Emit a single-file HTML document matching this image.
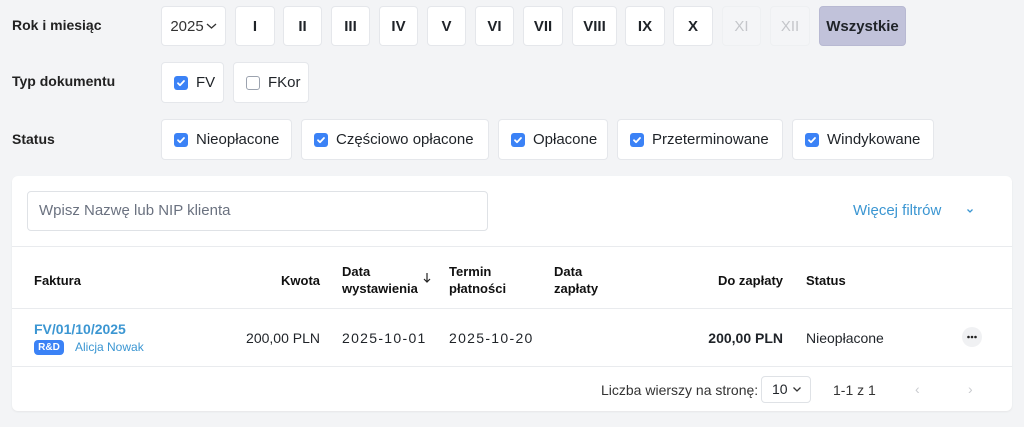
<!DOCTYPE html>
<html><head><meta charset="utf-8"><style>
*{box-sizing:border-box;margin:0;padding:0}
body{width:1024px;height:427px;background:#f3f4f6;font-family:"Liberation Sans",sans-serif;color:#1f2328;position:relative;overflow:hidden;font-size:14px}
.a{position:absolute}
.lbl{position:absolute;left:12px;font-weight:bold;font-size:14px;color:#222}
.b{position:absolute;background:#fff;border:1px solid #e5e7eb;border-radius:4px;display:flex;align-items:center;justify-content:center;font-size:15px}
.m{font-weight:bold;top:6px;height:40px}
.dis{background:#f4f5f7;border-color:#eef0f2;color:#c4c6ca;font-weight:normal}
.cb{width:14px;height:14px;border-radius:3px;background:#3b82f6;margin-right:8px;display:inline-flex;align-items:center;justify-content:center}
.cb.off{background:#fff;border:1px solid #9ca3af}
.ck{justify-content:flex-start;padding-left:12px;height:41px}
.h{position:absolute;font-weight:bold;font-size:13px;line-height:17px;color:#111}
.c{position:absolute;font-size:14px}
</style></head><body>
<div class="lbl" style="top:17px">Rok i miesiąc</div>
<div class="lbl" style="top:73px">Typ dokumentu</div>
<div class="lbl" style="top:131px">Status</div>

<div class="b m" style="left:161px;width:65px;font-weight:normal;color:#333">2025<svg width="11" height="8" viewBox="0 0 11 8" style="margin-left:2px"><path d="M1 2l4.5 4 4.5-4" fill="none" stroke="#333" stroke-width="1.3"/></svg></div>
<div class="b m" style="left:235px;width:40px">I</div>
<div class="b m" style="left:283px;width:39px">II</div>
<div class="b m" style="left:331px;width:39px">III</div>
<div class="b m" style="left:379px;width:39px">IV</div>
<div class="b m" style="left:427px;width:39px">V</div>
<div class="b m" style="left:475px;width:39px">VI</div>
<div class="b m" style="left:523px;width:40px">VII</div>
<div class="b m" style="left:572px;width:45px">VIII</div>
<div class="b m" style="left:625px;width:40px">IX</div>
<div class="b m" style="left:673px;width:40px">X</div>
<div class="b m dis" style="left:722px;width:39px">XI</div>
<div class="b m dis" style="left:770px;width:40px">XII</div>
<div class="b m" style="left:819px;width:87px;background:#c1c2da;border-color:#b8b9d2">Wszystkie</div>

<svg width="0" height="0" style="position:absolute"><defs><symbol id="t" viewBox="0 0 14 14"><path d="M4 7.2l2 2 4-4.2" fill="none" stroke="#fff" stroke-width="1.8" stroke-linecap="round" stroke-linejoin="round"/></symbol></defs></svg>

<div class="b ck" style="left:161px;top:62px;width:63px"><span class="cb"><svg width="14" height="14"><use href="#t"/></svg></span>FV</div>
<div class="b ck" style="left:233px;top:62px;width:76px"><span class="cb off"></span>FKor</div>

<div class="b ck" style="left:161px;top:119px;width:131px"><span class="cb"><svg width="14" height="14"><use href="#t"/></svg></span>Nieopłacone</div>
<div class="b ck" style="left:301px;top:119px;width:188px"><span class="cb"><svg width="14" height="14"><use href="#t"/></svg></span>Częściowo opłacone</div>
<div class="b ck" style="left:498px;top:119px;width:110px"><span class="cb"><svg width="14" height="14"><use href="#t"/></svg></span>Opłacone</div>
<div class="b ck" style="left:617px;top:119px;width:166px"><span class="cb"><svg width="14" height="14"><use href="#t"/></svg></span>Przeterminowane</div>
<div class="b ck" style="left:792px;top:119px;width:142px"><span class="cb"><svg width="14" height="14"><use href="#t"/></svg></span>Windykowane</div>

<div class="a" style="left:12px;top:176px;width:1000px;height:235px;background:#fff;border-radius:6px;box-shadow:0 1px 2px rgba(0,0,0,.06)">
<div class="a" style="left:15px;top:15px;width:461px;height:40px;border:1px solid #dfe2e6;border-radius:4px;padding-left:11px;line-height:38px;color:#6b7280;font-size:15px">Wpisz Nazwę lub NIP klienta</div>
<div class="a" style="left:841px;top:26px;color:#3b96d2;font-size:15px">Więcej filtrów</div>
<svg class="a" style="left:954px;top:32px" width="8" height="6" viewBox="0 0 8 6"><path d="M1.5 1.5l2.5 2.5 2.5-2.5" fill="none" stroke="#3b96d2" stroke-width="1.3"/></svg>
<div class="a" style="left:0;top:70px;width:1000px;height:1px;background:#e9ebee"></div>
<div class="a" style="left:0;top:132px;width:1000px;height:1px;background:#e9ebee"></div>
<div class="a" style="left:0;top:190px;width:1000px;height:1px;background:#e9ebee"></div>

<div class="h" style="left:22px;top:96px">Faktura</div>
<div class="h" style="left:250px;width:58px;text-align:right;top:96px">Kwota</div>
<div class="h" style="left:330px;top:87px">Data<br>wystawienia</div>
<svg class="a" style="left:411px;top:96px" width="8" height="12" viewBox="0 0 8 12"><path d="M4 1v9M1 7l3 3 3-3" fill="none" stroke="#222" stroke-width="1.2"/></svg>
<div class="h" style="left:437px;top:87px">Termin<br>płatności</div>
<div class="h" style="left:542px;top:87px">Data<br>zapłaty</div>
<div class="h" style="left:650px;width:121px;text-align:right;top:96px">Do zapłaty</div>
<div class="h" style="left:794px;top:96px">Status</div>

<div class="c" style="left:22px;top:145px;color:#3b96d2;font-weight:bold;font-size:14px">FV/01/10/2025</div>
<div class="a" style="left:22px;top:164px;width:30px;height:15px;background:#3b82f6;border-radius:4px;color:#fff;font-size:10px;font-weight:bold;text-align:center;line-height:15px">R&amp;D</div>
<div class="a" style="left:63px;top:164px;color:#3b96d2;font-size:12px">Alicja Nowak</div>
<div class="c" style="left:200px;width:108px;text-align:right;top:154px">200,00 PLN</div>
<div class="c" style="left:330px;top:154px;letter-spacing:1.3px">2025-10-01</div>
<div class="c" style="left:437px;top:154px;letter-spacing:1.3px">2025-10-20</div>
<div class="c" style="left:650px;width:121px;text-align:right;top:154px;font-weight:bold">200,00 PLN</div>
<div class="c" style="left:794px;top:154px">Nieopłacone</div>
<svg class="a" style="left:950px;top:151px" width="20" height="20" viewBox="0 0 20 20"><circle cx="10" cy="10" r="10" fill="#f0f1f3"/><circle cx="6.5" cy="10" r="1.3" fill="#222"/><circle cx="10" cy="10" r="1.3" fill="#222"/><circle cx="13.5" cy="10" r="1.3" fill="#222"/></svg>

<div class="c" style="left:589px;top:206px;color:#333">Liczba wierszy na stronę:</div>
<div class="a" style="left:749px;top:200px;width:50px;height:27px;border:1px solid #dfe2e6;border-radius:4px;padding-left:10px;line-height:25px">10</div>
<svg class="a" style="left:780px;top:210px" width="10" height="7" viewBox="0 0 10 7"><path d="M1.5 1.5l3.5 3.5 3.5-3.5" fill="none" stroke="#333" stroke-width="1.3"/></svg>
<div class="c" style="left:821px;top:206px;color:#333">1-1 z 1</div>
<div class="c" style="left:903px;top:205px;color:#c9cbcf">‹</div>
<div class="c" style="left:956px;top:205px;color:#c9cbcf">›</div>
</div>
</body></html>
